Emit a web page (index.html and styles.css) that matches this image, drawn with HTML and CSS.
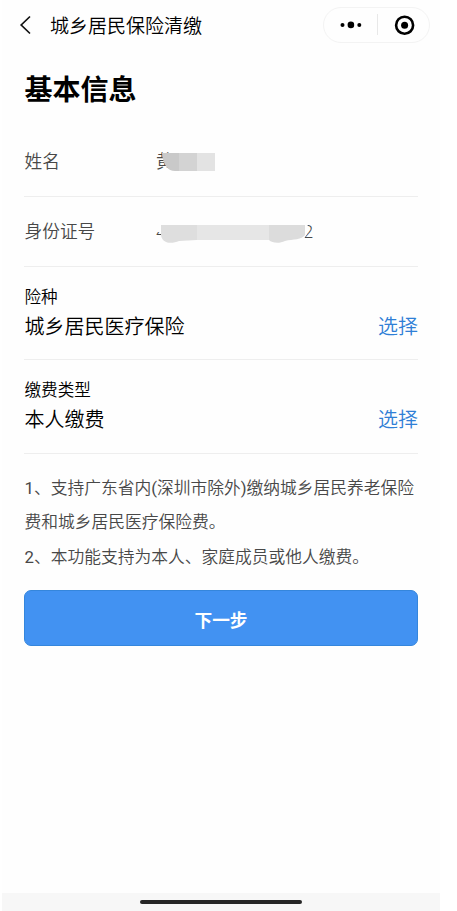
FILE: index.html
```
<!DOCTYPE html>
<html lang="zh-CN">
<head>
<meta charset="utf-8">
<title>城乡居民保险清缴</title>
<link rel="stylesheet" href="styles.css">
</head>
<body>
<div class="page">
  <header class="nav">
    <svg class="back" width="14" height="20" viewBox="0 0 14 20"><path d="M11 1.5 2.2 10 11 18.5"/></svg>
    <span class="nav-title">城乡居民保险清缴</span>
    <div class="capsule">
      <svg width="105" height="34" viewBox="0 0 105 34">
        <circle cx="18.5" cy="16.9" r="2"/><circle cx="26.9" cy="16.9" r="3.3"/><circle cx="35.3" cy="16.9" r="2"/>
        <path class="split" d="M53.5 6v21"/>
        <circle class="ring" cx="80.6" cy="17.2" r="8.5"/><circle cx="80.6" cy="17.2" r="3.5"/>
      </svg>
    </div>
  </header>
  <main class="content">
    <h1>基本信息</h1>
    <div class="row">
      <span class="label">姓名</span>
      <span class="value">黄<svg class="mask mask-name" width="55" height="19" viewBox="0 0 55 19">
        <path fill="#c9c9c9" d="M1 0h17v18h-4C7 18 2 12 1 0z"/><path fill="#d3d3d3" d="M18 0h18v18H18z"/><path fill="#e3e3e3" d="M36 0h18v18H36z"/>
      </svg></span>
    </div>
    <div class="row">
      <span class="label">身份证号</span>
      <span class="value id-value"><span>4</span><span>2</span><svg class="mask mask-id" width="154" height="24" viewBox="0 0 154 24">
        <path fill="#fefefe" d="M0 0h147l4 6-1 8-4 6H4V12H0z"/>
        <path fill="#dedede" d="M4 5h36v15l-18 1C15 24 5 24 4 15z"/><path fill="#e6e6e6" d="M40 5h72v15H40z"/><path fill="#dcdcdc" d="M112 5h36v10c-3 5-12 4-20 6-6 3-13 2-16-1z"/>
      </svg></span>
    </div>
    <div class="choice">
      <div><div class="caption">险种</div><div class="selected">城乡居民医疗保险</div></div>
      <a class="pick">选择</a>
    </div>
    <div class="choice last">
      <div><div class="caption">缴费类型</div><div class="selected">本人缴费</div></div>
      <a class="pick">选择</a>
    </div>
    <div class="notes">
      <p><span class="latin">1</span>、支持广东省内<span class="latin">(</span>深圳市除外<span class="latin">)</span>缴纳城乡居民养老保险<br>费和城乡居民医疗保险费。</p>
      <p><span class="latin">2</span>、本功能支持为本人、家庭成员或他人缴费。</p>
    </div>
    <button class="next">下一步</button>
  </main>
  <footer class="home"><span class="home-bar"></span></footer>
</div>
</body>
</html>
```
FILE: styles.css
```
* { box-sizing: border-box; }
body {
  margin: 0;
  background: #fff;
  color: #000;
  font-family: Roboto, "Noto Sans CJK SC", sans-serif;
  font-weight: 350;
}
.page {
  display: flex;
  flex-direction: column;
  width: 438px;
  height: 911px;
  margin-left: 2px;
  background: #fefefe;
}
.nav {
  display: flex;
  align-items: center;
  height: 50px;
  padding: 0 10px 0 17px;
}
.back { fill: none; stroke: #111; stroke-width: 1.7; }
.nav-title { margin-left: 17px; padding-top: 3px; font-size: 19px; line-height: 28px; }
.capsule {
  width: 107px;
  height: 36px;
  margin-left: auto;
  border: 1px solid #f3f3f3;
  border-radius: 18px;
}
.capsule svg { display: block; fill: #000; }
.capsule .split { stroke: #e8e8e8; }
.capsule .ring { fill: none; stroke: #000; stroke-width: 2.6; }
.content {
  flex: 1;
  padding: 0 22px;
}
h1 {
  margin: 20px 0 16px;
  padding-left: 0.5px;
  font-size: 28px;
  line-height: 41px;
  font-weight: 700;
  color: #000;
}
.row {
  display: flex;
  align-items: center;
  height: 70px;
  border-bottom: 1px solid #eee;
  font-size: 17.7px;
  line-height: 26px;
  color: #484848;
}
.label { width: 132px; padding-left: 0.5px; }
.value { position: relative; }
.id-value { display: flex; justify-content: space-between; width: 157px; }
.mask { position: absolute; }
.mask-name { left: 5px; top: 4px; }
.mask-id { left: 1px; top: 1px; }
.choice {
  display: flex;
  justify-content: space-between;
  align-items: flex-end;
  height: 93px;
  padding: 0 0 17px 0.5px;
  border-bottom: 1px solid #eee;
}
.choice.last { height: 94px; padding-bottom: 18px; }
.caption { font-size: 16.6px; line-height: 28px; }
.selected, .pick { font-size: 20px; line-height: 30px; }
.pick { color: #2f7fd6; }
.notes {
  padding: 17px 0 0 0.5px;
  font-size: 16.75px;
  line-height: 34.4px;
  color: #484848;
  white-space: nowrap;
}
.notes p { margin: 0; }
.latin { font-weight: 400; }
.next {
  display: block;
  width: 394px;
  height: 56px;
  margin: 16px 0 0;
  padding: 5px 0 0;
  border: 1px solid #3586dc;
  border-radius: 7px;
  background: #4292f2;
  color: #fff;
  font: 700 17.7px/26px Roboto, "Noto Sans CJK SC", sans-serif;
}
.home {
  display: flex;
  justify-content: center;
  align-items: center;
  height: 18px;
  background: #f7f7f7;
}
.home-bar { width: 162px; height: 4px; border-radius: 2px; background: #262626; }
```
